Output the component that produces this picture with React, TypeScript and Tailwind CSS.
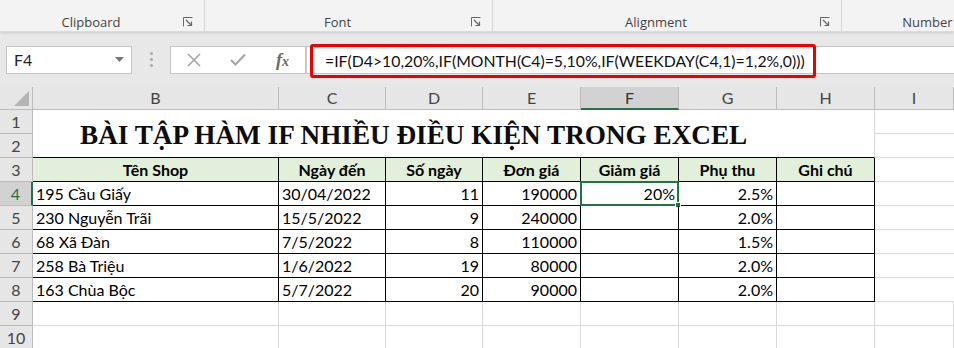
import React from 'react';

const cellFont = { fontFamily: 'Lato, "Open Sans", sans-serif' };

type Row = { shop: string; date: string; days: number; price: number; discount: string; extra: string };

const rows: Row[] = [
  { shop: '195 Cầu Giấy', date: '30/04/2022', days: 11, price: 190000, discount: '20%', extra: '2.5%' },
  { shop: '230 Nguyễn Trãi', date: '15/5/2022', days: 9, price: 240000, discount: '', extra: '2.0%' },
  { shop: '68 Xã Đàn', date: '7/5/2022', days: 8, price: 110000, discount: '', extra: '1.5%' },
  { shop: '258 Bà Triệu', date: '1/6/2022', days: 19, price: 80000, discount: '', extra: '2.0%' },
  { shop: '163 Chùa Bộc', date: '5/7/2022', days: 20, price: 90000, discount: '', extra: '2.0%' },
];

const Launcher = () => (
  <svg width="10" height="10" viewBox="0 0 10 10" className="text-[#666]">
    <path d="M0.5 9.5V0.5h9" fill="none" stroke="currentColor" strokeWidth="1" />
    <path d="M3 3l5.5 5.5M8.5 4.5v4h-4" fill="none" stroke="currentColor" strokeWidth="1.2" />
  </svg>
);

const RibbonGroup = ({ label, width, launcher = true }: { label: string; width: string; launcher?: boolean }) => (
  <div className={`${width} h-full flex items-start border-r border-[#d4d4d4] shrink-0`}>
    <div className="flex-1 text-center text-[13px] text-[#444] pt-[12px] leading-[20px]">{label}</div>
    <div className="w-[22px] pt-[17px] flex justify-start pl-[1px]">{launcher && <Launcher />}</div>
  </div>
);

const gray = 'border-[#d9d9d9]';

const App: React.FC = () => {
  return (
    <div className="w-[954px] h-[348px] overflow-hidden bg-white" style={{ fontFamily: '"Open Sans", "Noto Sans", sans-serif' }}>
      {/* Ribbon group labels */}
      <div className="h-[32px] bg-[#f3f3f3] flex border-b border-[#dcdcdc] shadow-[0_1px_3px_rgba(0,0,0,0.12)] relative z-10">
        <RibbonGroup label="Clipboard" width="w-[205px]" />
        <RibbonGroup label="Font" width="w-[288px]" />
        <RibbonGroup label="Alignment" width="w-[349px]" />
        <RibbonGroup label="Number" width="w-[194px]" />
      </div>

      {/* Formula bar */}
      <div className="h-[55px] bg-[#e8e8e8] flex items-center">
        <div className="ml-[6px] w-[126px] h-[28px] bg-white border border-[#c6c6c6] flex items-center justify-between pl-[7px] pr-[7px]">
          <span className="text-[16px] text-[#222]" style={cellFont}>F4</span>
          <svg width="9" height="5" viewBox="0 0 9 5"><path d="M0 0h9L4.5 5z" fill="#777" /></svg>
        </div>
        <div className="w-[38px] flex flex-col items-center gap-[3px]">
          <span className="w-[3px] h-[3px] rounded-full bg-[#aaa]" />
          <span className="w-[3px] h-[3px] rounded-full bg-[#aaa]" />
          <span className="w-[3px] h-[3px] rounded-full bg-[#aaa]" />
        </div>
        <div className="w-[136px] h-[28px] bg-white border border-[#c6c6c6] flex items-center">
          <svg width="14" height="14" viewBox="0 0 14 14" className="ml-[16px]">
            <path d="M1 1l12 12M13 1L1 13" stroke="#a6a6a6" strokeWidth="1.6" />
          </svg>
          <svg width="16" height="13" viewBox="0 0 16 13" className="ml-[29px]">
            <path d="M1 7l4.5 4.5L15 1.5" fill="none" stroke="#a6a6a6" strokeWidth="2" />
          </svg>
          <span
            className="ml-[30px] text-[18px] italic font-bold text-[#6a6a6a] leading-none"
            style={{ fontFamily: '"Liberation Serif", serif' }}
          >
            f<span className="text-[14px]">x</span>
          </span>
        </div>
        <div className="flex-1 h-[28px] bg-white border border-[#c6c6c6] border-r-0 relative">
          <div className="absolute left-[3px] top-[-3px] w-[506px] h-[34px] border-[3px] border-[#ee0000] rounded-[3px] flex items-center pl-[12px]">
            <span className="text-[15.8px] text-[#111] whitespace-nowrap" style={cellFont}>
              =IF(D4&gt;10,20%,IF(MONTH(C4)=5,10%,IF(WEEKDAY(C4,1)=1,2%,0)))
            </span>
          </div>
        </div>
      </div>

      {/* Sheet grid */}
      <div
        className="grid grid-cols-[33px_246px_107px_97px_98px_98px_98px_98px_1fr] grid-rows-[23px_repeat(10,24px)] text-[16px] text-black"
        style={cellFont}
      >
        {/* column headers */}
        <div className="bg-[#e6e6e6] border-r border-b border-[#bcbcbc] flex items-end justify-end pr-[3px] pb-[3px]">
          <svg width="15" height="15" viewBox="0 0 15 15"><path d="M15 0V15H0z" fill="#b4b4b4" /></svg>
        </div>
        {['B', 'C', 'D', 'E', 'F', 'G', 'H', 'I'].map((c) =>
          c === 'F' ? (
            <div key={c} className="bg-[#d2d2d2] border-r border-[#bcbcbc] border-b-2 border-b-[#217346] flex items-center justify-center text-[#333]">
              {c}
            </div>
          ) : (
            <div key={c} className="bg-[#e6e6e6] border-r border-b border-[#bcbcbc] flex items-center justify-center text-[#444]">
              {c}
            </div>
          )
        )}

        {/* rows 1-2: merged title */}
        <div className="bg-[#e6e6e6] border-r border-b border-[#bcbcbc] flex items-center justify-center text-[#444]">1</div>
        <div
          className="col-start-2 col-span-7 row-span-2 bg-white border-b border-black border-r border-r-[#d9d9d9] flex items-center pl-[47px] pt-[3px] font-bold text-[27.2px] text-[#0d0d0d] whitespace-nowrap"
          style={{ fontFamily: '"Liberation Serif", "Times New Roman", serif' }}
        >
          BÀI TẬP HÀM IF NHIỀU ĐIỀU KIỆN TRONG EXCEL
        </div>
        <div className={`border-b ${gray}`} />
        <div className="bg-[#e6e6e6] border-r border-b border-[#bcbcbc] flex items-center justify-center text-[#444]">2</div>
        <div className={`border-b ${gray}`} />

        {/* row 3: table header */}
        <div className="bg-[#e6e6e6] border-r border-b border-[#bcbcbc] flex items-center justify-center text-[#444]">3</div>
        {['Tên Shop', 'Ngày đến', 'Số ngày', 'Đơn giá', 'Giảm giá', 'Phụ thu', 'Ghi chú'].map((h) => (
          <div key={h} className="bg-[#e2efda] border-r border-b border-black flex items-center justify-center font-bold">
            {h}
          </div>
        ))}
        <div className={`border-b ${gray}`} />

        {/* rows 4-8: data */}
        {rows.map((r, i) => {
          const n = i + 4;
          const selected = n === 4;
          return (
            <React.Fragment key={n}>
              <div
                className={
                  selected
                    ? 'bg-[#d2d2d2] border-b border-b-[#bcbcbc] border-r-2 border-r-[#217346] flex items-center justify-center text-[#217346]'
                    : 'bg-[#e6e6e6] border-r border-b border-[#bcbcbc] flex items-center justify-center text-[#444]'
                }
              >
                {n}
              </div>
              <div className="border-r border-b border-black flex items-center pl-[3px] whitespace-nowrap">{r.shop}</div>
              <div className="border-r border-b border-black flex items-center pl-[3px]">{r.date}</div>
              <div className="border-r border-b border-black flex items-center justify-end pr-[3px]">{r.days}</div>
              <div className="border-r border-b border-black flex items-center justify-end pr-[3px]">{r.price}</div>
              <div className="border-r border-b border-black flex items-center justify-end pr-[3px] relative">
                {r.discount}
                {selected && (
                  <div className="absolute left-[-1px] top-[-1px] right-[-1px] bottom-[-1px] border-2 border-[#217346]">
                    <span className="absolute right-[-4px] bottom-[-4px] w-[6px] h-[6px] bg-[#217346] border border-white" />
                  </div>
                )}
              </div>
              <div className="border-r border-b border-black flex items-center justify-end pr-[3px]">{r.extra}</div>
              <div className="border-r border-b border-black" />
              <div className={`border-b ${gray}`} />
            </React.Fragment>
          );
        })}

        {/* rows 9-10: empty */}
        {[9, 10].map((n) => (
          <React.Fragment key={n}>
            <div className="bg-[#e6e6e6] border-r border-b border-[#bcbcbc] flex items-center justify-center text-[#444]">{n}</div>
            {[0, 1, 2, 3, 4, 5, 6, 7].map((k) => (
              <div key={k} className={`border-r border-b ${gray}`} />
            ))}
          </React.Fragment>
        ))}
      </div>
    </div>
  );
};

export default App;
